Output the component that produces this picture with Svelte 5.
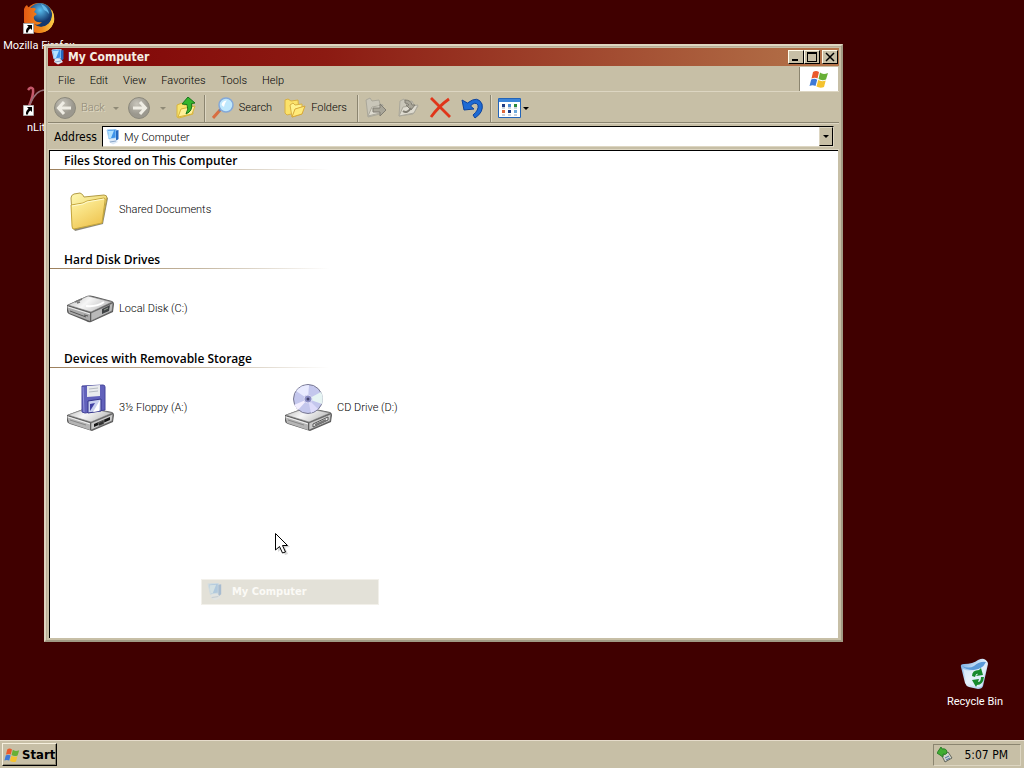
<script lang="ts">
  interface Drive {
    name: string;
    icon: "folder" | "disk" | "floppy" | "cd";
  }

  interface Group {
    title: string;
    items: Drive[];
  }

  const menus = ["File", "Edit", "View", "Favorites", "Tools", "Help"];

  const groups: Group[] = [
    {
      title: "Files Stored on This Computer",
      items: [{ name: "Shared Documents", icon: "folder" }],
    },
    {
      title: "Hard Disk Drives",
      items: [{ name: "Local Disk (C:)", icon: "disk" }],
    },
    {
      title: "Devices with Removable Storage",
      items: [
        { name: "3½ Floppy (A:)", icon: "floppy" },
        { name: "CD Drive (D:)", icon: "cd" },
      ],
    },
  ];

  let address = $state("My Computer");
</script>

{#snippet computer()}
  <svg class="computer" viewBox="0 0 16 16" aria-hidden="true">
    <path d="M2 1 L11 0 L11 9 L4 10Z" fill="#3f94ea" stroke="#a9d2f6" />
    <path d="M3 2 L9 1.500 L6 9 L4 9Z" fill="#b4e2ff" />
    <path d="M11 1.500 L13.500 1 L13.500 10 L11 12Z" fill="#2468c0" />
    <path d="M5 10 L10 9.500 L13 13 L8 15.500 L4 13Z" fill="#dde9f6" />
    <path d="M5 13 L11 12" stroke="#8aa6c8" />
  </svg>
{/snippet}

{#snippet flag()}
  <svg class="flag" viewBox="0 0 20 18" aria-hidden="true">
    <path d="M4 2 Q7 0 10 2 L8.500 8.500 Q6 7 2.500 8.500Z" fill="#ea5a2c" />
    <path d="M11 2.500 Q14 5 19 3 L17 9.500 Q13 11 9.500 9Z" fill="#68b036" />
    <path d="M2.200 9.500 Q5.500 8 8.200 9.700 L6.500 16 Q3.500 14.500 0.500 16Z" fill="#3f79d6" />
    <path d="M9.200 10 Q12.500 12 16.700 10.500 L15 17 Q11 18.500 7.500 16.500Z" fill="#f4c22e" />
  </svg>
{/snippet}

{#snippet shortcut()}
  <svg class="shortcut" viewBox="0 0 11 11" aria-hidden="true">
    <path d="M0.500 0.500h10v10h-10z" fill="#fff" stroke="#aaa" />
    <path d="M4 2h5v5L7.500 5.500C6 6.500 5 7.500 5 9.500H3C2.500 7 4 5 5.500 3.800Z" fill="#000" />
  </svg>
{/snippet}

{#snippet driveIcon(kind: Drive["icon"])}
  <svg class="drive-icon" viewBox="0 0 48 48" aria-hidden="true">
    {#if kind === "folder"}
      <path d="M7 42 L9 45 L37 38 L42 12 L40 11Z" fill="#6f6a58" opacity="0.8" />
      <path d="M5 12 Q5 9 8 8 L14 7 Q17 8 18 11 L38 9 Q41 9 41 12 L36 37 L7 43Z" fill="url(#folder-back)" stroke="#b29b45" />
      <path d="M5 19 L17 17 L21 15 L38 12 Q40 12 39 15 L36 37 L8 43 Q6 43 6 40Z" fill="url(#folder-front)" stroke="#c4a63d" />
      <path d="M6 20 L17 18 L21 16 L38 13" fill="none" stroke="#fffbd2" />
    {:else if kind === "disk"}
      <path d="M1 20 L21 11 Q24 10 27 11 L46 16 Q48 17 48 19 L47 27 L25 37 Q23 38 20 36 L3 29 Q1 28 1 26Z" fill="#5a5a5a" />
      <path d="M2 20 L22 11 L46 17 L25 27Z" fill="url(#metal)" stroke="#858585" stroke-width="0.6" />
      <path d="M1 21 L24 28 L24 36 L3 28Z" fill="#aaa" />
      <path d="M2 22 L24 29" stroke="#eee" />
      <path d="M25 28 L47 18 L46 26 L25 36Z" fill="#b9b9b9" stroke="#666" stroke-width="0.6" />
      <path d="M36 24 L44 20 L43 26 L36 29Z" fill="#3f4244" />
      <path d="M38 25 L42 23" stroke="#939c8e" />
      <path d="M9 17 L16 14 M11 18 L14 17" stroke="#777" stroke-width="1.500" />
      <path d="M20 21 Q31 22 38 17" fill="none" stroke="#fff" stroke-width="2" />
      <path d="M4 26 L20 32 M18 30 L22 31" stroke="#555" />
    {:else}
      <path d="M1 31 L20 24 Q23 23 26 24 L46 28 Q48 29 48 31 L47 38 L26 47 L4 40 Q1 39 1 37Z" fill="#5c5c5c" />
      <path d="M2 31 L22 24 L46 29 L25 38Z" fill="url(#metal)" stroke="#8c8c8c" stroke-width="0.6" />
      <path d="M1 32 L24 39 L24 46 L3 39Z" fill="#b5b5b5" />
      <path d="M2 33 L24 40" stroke="#f2f2f2" />
      <path d="M4 36 L20 41" stroke="#888" />
      <path d="M25 39 L47 30 L46 37 L25 46Z" fill="#c9c9c9" stroke="#666" stroke-width="0.6" />
      {#if kind === "floppy"}
        <path d="M28 40 L44 33 L44 36 L28 43Z" fill="#161616" />
        <path d="M32 39 L38 36 L38 40 L33 42Z" fill="#333" stroke="#999" stroke-width="0.5" />
        <path d="M16 2 L37 1 Q39 1 39 3 L39 26 L19 29 L16 28Z" fill="#6161bb" stroke="#44449a" />
        <path d="M17 3 L18 28" stroke="#9494de" />
        <path d="M21 2 L34 1 L34 12 L21 13Z" fill="#e9ebee" />
        <path d="M23 5 L32 4 M23 8 L32 7" stroke="#b6bbc2" />
        <path d="M22 17 L35 15 L35 27 L22 29Z" fill="#c9d0ef" stroke="#34348a" />
        <path d="M24 20 L29 19 L24 27Z" fill="#4141a4" />
        <path d="M34 16 L27 28 L33 27Z" fill="#fff" />
      {:else}
        <path d="M29 40 L44 33 L44 36 L29 43Z" fill="#f4f4f4" stroke="#555" />
        <path d="M31 41 L42 36" stroke="#777" stroke-width="2" />
        <circle cx="24" cy="15" r="14.500" fill="#c4c7ed" stroke="#777791" />
        <path d="M24 15 L12 7 Q17 1 25 1 Z" fill="#e9ebff" />
        <path d="M24 15 L37 8 Q40 13 38 20Z" fill="#e6f4f3" />
        <path d="M24 15 L14 26 L10 21Z" fill="#f3efff" />
        <path d="M24 15 L27 29 L34 25Z" fill="#dedcfb" />
        <circle cx="24" cy="15" r="4" fill="#8c8ec4" stroke="#dadaf4" />
        <circle cx="24" cy="15" r="1.500" fill="#42426c" />
      {/if}
    {/if}
  </svg>
{/snippet}

<!-- gradients shared by the icons below -->
<svg class="defs" aria-hidden="true">
  <defs>
    <linearGradient id="folder-back" x1="0" y1="0" x2="1" y2="1">
      <stop offset="0" stop-color="#fff8b0" />
      <stop offset="1" stop-color="#e6c552" />
    </linearGradient>
    <linearGradient id="folder-front" x1="0" y1="0" x2="0.6" y2="1">
      <stop offset="0" stop-color="#fff7a8" />
      <stop offset="1" stop-color="#efc552" />
    </linearGradient>
    <linearGradient id="metal" x1="0" y1="0" x2="1" y2="0.4">
      <stop offset="0" stop-color="#bcbcbc" />
      <stop offset="0.5" stop-color="#f6f6f6" />
      <stop offset="1" stop-color="#c2c2c2" />
    </linearGradient>
    <radialGradient id="round-btn" cx="0.4" cy="0.3">
      <stop offset="0" stop-color="#c8c5bb" />
      <stop offset="1" stop-color="#9b988e" />
    </radialGradient>
    <radialGradient id="globe" cx="0.5" cy="0.3">
      <stop offset="0" stop-color="#58bff0" />
      <stop offset="1" stop-color="#14386e" />
    </radialGradient>
    <linearGradient id="fox" x1="0" y1="0" x2="1" y2="0">
      <stop offset="0" stop-color="#e35a14" />
      <stop offset="0.6" stop-color="#f08a1c" />
      <stop offset="1" stop-color="#fbd04a" />
    </linearGradient>
    <linearGradient id="bin" x1="0" y1="0" x2="1" y2="1">
      <stop offset="0" stop-color="#5f9ede" />
      <stop offset="0.5" stop-color="#e4f1fb" />
      <stop offset="1" stop-color="#8db8e4" />
    </linearGradient>
  </defs>
</svg>

<div class="screen">
  <main class="desktop">
    <button class="shortcut-icon firefox">
      <span class="picture">
        <svg class="big" viewBox="0 0 32 32" aria-hidden="true">
          <circle cx="16" cy="16" r="15" fill="url(#fox)" />
          <circle cx="17" cy="13" r="12" fill="url(#globe)" />
          <path d="M18 2 Q25 5 26 12 Q24 9 21 8Z" fill="#65b9e8" />
          <path d="M1 7 Q2 4 4 3 Q5 6 8 6 Q11 5 13 7 L11 10 Q15 12 13 13 Q10 14 11 17 Q13 21 19 20 Q16 24 11 22 Q18 28 26 22 Q30 17 29 8 Q32 14 31 20 Q27 31 16 31 Q5 31 1 20Z" fill="url(#fox)" />
        </svg>
        {@render shortcut()}
      </span>
      Mozilla Firefox
    </button>

    <button class="shortcut-icon nlite">
      <span class="picture">
        <svg class="big" viewBox="0 0 32 32" aria-hidden="true">
          <path d="M5 6 Q8 2 10 5 Q11 10 6 22" fill="none" stroke="#c4586a" stroke-width="2.500" />
          <path d="M7 20 Q13 6 22 6" fill="none" stroke="#957077" stroke-width="1.500" />
        </svg>
        {@render shortcut()}
      </span>
      nLite
    </button>

    <button class="shortcut-icon recycle">
      <span class="picture">
        <svg class="big" viewBox="0 0 32 32" aria-hidden="true">
          <path d="M2 9 Q1 6 5 6 Q14 6 19 2 Q23 0 25 1 Q29 3 29 6 L24 28 Q23 31 19 31 L10 29 Q7 28 6 25Z" fill="url(#bin)" />
          <path d="M3 8 Q10 11 15 8 Q21 3 27 4 Q23 12 14 12 Q7 12 3 8Z" fill="#5a9ad8" />
          <path d="M4 11 Q10 14 16 12 Q24 10 28 6 L23 28 Q20 30 17 29 L8 26Z" fill="#e5f2fb" opacity="0.75" />
          <path d="M13 18 Q13 12 20 12 L22 10 L24 17 L17 18 L19 16 Q17 15 16 19Z" fill="#178a2d" />
          <path d="M25 19 Q24 27 18 27 L17 29 L13 22 L20 21 L19 24 Q22 24 22 19Z" fill="#178a2d" />
        </svg>
      </span>
      Recycle Bin
    </button>

    <section class="window" aria-label="My Computer">
      <header class="titlebar">
        {@render computer()}
        <h1>My Computer</h1>
        <div class="captions">
          <button aria-label="Minimize">
            <svg viewBox="0 0 12 10"><path d="M2 7h6v2H2z" /></svg>
          </button>
          <button aria-label="Maximize">
            <svg viewBox="0 0 12 10"><path d="M1 0h10v10H1zM2 2v7h8V2z" fill-rule="evenodd" /></svg>
          </button>
          <button class="close" aria-label="Close">
            <svg viewBox="0 0 12 10"><path d="M2 1 L10 9 M10 1 L2 9" stroke="#000" stroke-width="1.500" /></svg>
          </button>
        </div>
      </header>

      <nav class="menubar">
        {#each menus as menu (menu)}
          <button>{menu}</button>
        {/each}
        <span class="throbber">{@render flag()}</span>
      </nav>

      <div class="toolbar">
        <button class="tool off back" disabled>
          <svg class="icon" viewBox="0 0 22 22">
            <circle cx="11" cy="11" r="10.500" fill="url(#round-btn)" stroke="#8c897c" />
            <path d="M10 5 L4.500 11 L10 17 M5 11 H17" fill="none" stroke="#efede4" stroke-width="3" />
          </svg>
          Back
        </button>
        <button class="drop off" disabled aria-label="Back history"></button>
        <button class="tool off" disabled aria-label="Forward">
          <svg class="icon" viewBox="0 0 22 22">
            <circle cx="11" cy="11" r="10.500" fill="url(#round-btn)" stroke="#8c897c" />
            <path d="M12 5 L17.500 11 L12 17 M17 11 H5" fill="none" stroke="#efede4" stroke-width="3" />
          </svg>
        </button>
        <button class="drop off" disabled aria-label="Forward history"></button>
        <button class="tool last" aria-label="Up">
          <svg class="icon" viewBox="0 0 22 22">
            <path d="M2 8 L7 6 L9 8 L17 7 L18 17 L4 21 L2 20Z" fill="#f8e46e" stroke="#d8b43c" />
            <path d="M3 20 L6 12 L20 9 L17 17Z" fill="#fff09a" stroke="#d8b43c" />
            <path d="M7 7 L13 0 L20 6 L16.500 6.500 Q18 14 11 17 Q14 12 12 7.500Z" fill="#34b62c" stroke="#17741a" />
          </svg>
        </button>
        <span class="sep"></span>
        <button class="tool search">
          <svg class="icon" viewBox="0 0 22 22">
            <path d="M1 21 L9 12" stroke="#d86e42" stroke-width="3" />
            <path d="M7 14 L10 11" stroke="#6b83a8" stroke-width="2" />
            <circle cx="14" cy="8" r="7" fill="#bfe8fd" stroke="#84a8d8" stroke-width="1.500" />
            <path d="M9.500 8 Q10 3.500 15 3.500 Q13 5 12 10Z" fill="#fff" />
          </svg>
          Search
        </button>
        <button class="tool">
          <svg class="icon" viewBox="0 0 22 22">
            <path d="M1 3 L4 2 L7 4 L14 3 L15 15 L3 18 L1 16Z" fill="#fbe26a" stroke="#d8b043" />
            <path d="M6 8 L9 6 L11 8 L18 7 L18 17 L8 20Z" fill="#fff28e" stroke="#d8b043" />
            <path d="M8 20 L11 12 L21 9 L18 17Z" fill="#ffeb79" stroke="#d8a83a" />
          </svg>
          Folders
        </button>
        <span class="sep"></span>
        <button class="tool off" disabled aria-label="Move To">
          <svg class="icon" viewBox="0 0 22 22">
            <path d="M1 3 L5 1 L7 4 L14 3 L15 7 L18 8 L15 17 L3 20Z" fill="#c9c6b9" stroke="#aaa79a" />
            <path d="M3 19 L7 10 L18 8 L15 16Z" fill="#dedbd0" stroke="#aaa79a" />
            <path d="M8 11 H15 V7 L21 13 L15 19 V15 H8Z" fill="#a9a699" stroke="#807d72" />
          </svg>
        </button>
        <button class="tool off" disabled aria-label="Copy To">
          <svg class="icon" viewBox="0 0 22 22">
            <path d="M3 4 L7 2 L9 5 L15 4 L17 8 L21 9 L16 17 L2 19Z" fill="#c9c6b9" stroke="#aaa79a" />
            <path d="M2 19 L6 10 L21 8 L17 16Z" fill="#dedbd0" stroke="#aaa79a" />
            <path d="M8 3 Q14 3 15 8 H18 L14 13 L9 8 H12 Q11 6 8 6Z" fill="#a9a699" stroke="#807d72" />
            <path d="M6 14 Q10 17 14 11" fill="none" stroke="#807d72" stroke-width="2" />
          </svg>
        </button>
        <button class="tool" aria-label="Delete">
          <svg class="icon" viewBox="0 0 22 22">
            <path d="M2 1 Q9 8 21 20 M20 2 Q10 9 2 20" fill="none" stroke="#e0351a" stroke-width="2.800" />
          </svg>
        </button>
        <button class="tool last" aria-label="Undo">
          <svg class="icon" viewBox="0 0 22 22">
            <path d="M1 3 L3 13 L13 12 L9.500 9 Q14 4 17 8 Q18 13 12 18 L14 21 Q23 15 21 7 Q17 -2 6.500 6Z" fill="#1d6ad4" stroke="#0e439c" />
          </svg>
        </button>
        <span class="sep"></span>
        <button class="tool views" aria-label="Views">
          <svg class="views-icon" viewBox="0 0 23 20">
            <path d="M0.500 0.500h22v19h-22z" fill="#fff" stroke="#2264b8" />
            <path d="M1 1h21v3H1z" fill="#3c84d8" />
            <path d="M4 6h3v3H4zM10 12h3v3h-3z" fill="#1c3a84" />
            <path d="M10 6h3v3h-3z" fill="#4987d0" />
            <path d="M16 6h3v3h-3z" fill="#2b8a3c" />
            <path d="M4 12h3v3H4z" fill="#e0683a" />
            <path d="M16 12h3v3h-3z" fill="#6ca8dc" />
            <path d="M4 17h3M10 17h3M16 17h3M4 10h3M10 10h3M16 10h3" stroke="#9ab" />
          </svg>
        </button>
        <button class="drop" aria-label="Choose view"></button>
      </div>

      <div class="addressbar">
        <label for="address">Address</label>
        <div class="combo">
          {@render computer()}
          <input id="address" type="text" bind:value={address} />
          <button class="open" aria-label="Show addresses"></button>
        </div>
      </div>

      <div class="view">
        {#each groups as group (group.title)}
          <section class="group">
            <h2>{group.title}</h2>
            <div class="items">
              {#each group.items as item (item.name)}
                <button class="item">
                  {@render driveIcon(item.icon)}
                  {item.name}
                </button>
              {/each}
            </div>
          </section>
        {/each}
      </div>
    </section>

    <!-- minimize animation, almost faded out -->
    <div class="ghost" aria-hidden="true">
      {@render computer()}
      <span>My Computer</span>
    </div>

    <svg class="cursor" viewBox="0 0 16 24" aria-hidden="true">
      <path d="M3 3 L3 19 L7 15.500 L10 22 L13 21 L10 14.500 L15 14Z" fill="#999" opacity="0.4" />
      <path d="M0.500 0.500 L0.500 17 L4.500 13.500 L7.500 20 L10.500 19 L7.500 12.500 L12.500 12.500Z" fill="#fff" stroke="#000" />
    </svg>
  </main>

  <footer class="taskbar">
    <button class="start">{@render flag()} Start</button>
    <div class="tray">
      <svg class="tray-icon" viewBox="0 0 16 16" aria-hidden="true">
        <path d="M5 9 L11 5 L15 11 L8 15Z" fill="#d2d4cc" stroke="#62665c" />
        <path d="M8 11 L12 9 M9 13 L13 11" stroke="#4b6ea0" />
        <path d="M0 6 L4 0 L5 2 Q10 1 10 6 Q9 8 6 7 L6 10Z" fill="#41ad32" stroke="#2b7f28" />
      </svg>
      <time>5:07 PM</time>
    </div>
  </footer>
</div>

<style>
  :global(body) {
    --face: #c7bfa6;
    --light: #ddd6c2;
    --shade: #8b8570;
    --ui: Roboto, "Liberation Sans", sans-serif;
    --wide: "DejaVu Sans Condensed", "DejaVu Sans", sans-serif;
    background: #400000;
    color: #000;
    font: 300 11px/16px var(--ui);
  }

  button,
  input {
    margin: 0;
    padding: 0;
    border: 0;
    background: none;
    color: inherit;
    font: inherit;
  }

  svg {
    display: block;
    flex: none;
  }

  .defs {
    position: absolute;
    width: 0;
    height: 0;
  }

  .screen {
    display: flex;
    flex-direction: column;
    height: 100vh;
    overflow: hidden;
  }

  .desktop {
    position: relative;
    flex: 1;
  }

  .shortcut-icon {
    position: absolute;
    display: flex;
    flex-direction: column;
    align-items: center;
    gap: 4px;
    width: 78px;
    color: #fff;
    font-weight: 400;
    white-space: nowrap;
  }

  .firefox {
    left: 0;
    top: 2px;
  }

  .nlite {
    left: 0;
    top: 84px;
  }

  .recycle {
    right: 10px;
    bottom: 30px;
  }

  .picture {
    position: relative;
  }

  .big {
    width: 32px;
    height: 32px;
  }

  .shortcut {
    position: absolute;
    left: 0;
    bottom: 0;
    width: 11px;
    height: 11px;
  }

  .computer {
    width: 16px;
    height: 16px;
  }

  /* window */
  .window {
    position: absolute;
    inset: 44px 181px 98px 44px;
    display: flex;
    flex-direction: column;
    box-sizing: border-box;
    padding: 2px;
    border: 2px solid;
    border-color: #ded5c0 #a19a84 #a19a84 #ded5c0;
    background: var(--face);
    box-shadow: inset 1px 1px #b6ad96;
  }

  .titlebar {
    display: flex;
    align-items: center;
    gap: 2px;
    height: 18px;
    padding: 0 1px 0 2px;
    background: linear-gradient(90deg, #800406, #8c1a12 35%, #b4744a);
    color: #f6eee2;
  }

  h1 {
    flex: 1;
    margin: 0;
    padding-top: 1px;
    font: bold 12px/17px var(--wide);
  }

  .captions {
    display: flex;
  }

  .captions button {
    display: grid;
    place-items: center;
    box-sizing: border-box;
    width: 16px;
    height: 14px;
    border: 1px solid;
    border-color: #fffbea #000 #000 #fffbea;
    background: var(--face);
  }

  .captions .close {
    margin-left: 2px;
  }

  .captions svg {
    width: 12px;
    height: 10px;
  }

  .menubar {
    display: flex;
    align-items: stretch;
    height: 24px;
    margin-top: 1px;
    padding: 0 1px 0 2px;
    border-bottom: 1px solid var(--light);
  }

  .menubar button {
    padding: 3px 8px 0 7px;
  }

  .menubar button:first-child {
    padding-left: 8px;
  }

  .throbber {
    display: grid;
    place-items: center;
    width: 38px;
    margin-left: auto;
    border-left: 1px solid var(--shade);
    background: #fff;
  }

  .flag {
    width: 20px;
    height: 18px;
  }

  .toolbar {
    display: flex;
    align-items: center;
    height: 28px;
    padding: 2px 0 0 6px;
    border-bottom: 1px solid var(--shade);
  }

  .tool {
    display: flex;
    align-items: center;
    gap: 5px;
    margin-right: 10px;
  }

  .off {
    color: #8f8a76;
    text-shadow: 1px 1px #e2dcc8;
  }

  .back {
    margin-right: 8px;
  }

  .last {
    margin-right: 7px;
  }

  .icon {
    width: 22px;
    height: 22px;
  }

  .drop {
    width: 7px;
    height: 22px;
    margin-right: 8px;
  }

  .drop::before,
  .open::before {
    display: block;
    width: 0;
    margin: 0 auto;
    border: 3px solid transparent;
    border-top-color: #000;
    border-bottom: 0;
    content: "";
  }

  .drop.off::before {
    border-top-color: #8f8a76;
  }

  .sep {
    width: 1px;
    height: 27px;
    margin-right: 6px;
    border-left: 1px solid var(--shade);
    background: var(--light);
  }

  .search {
    margin-right: 12px;
  }

  .views {
    margin-right: 2px;
  }

  .views-icon {
    width: 23px;
    height: 20px;
  }

  .addressbar {
    display: flex;
    align-items: center;
    gap: 5px;
    height: 25px;
    padding: 0 5px 0 6px;
    border-top: 1px solid var(--light);
    border-bottom: 1px solid var(--light);
  }

  label {
    font: 12px/16px var(--wide);
  }

  .combo {
    display: flex;
    flex: 1;
    align-items: center;
    gap: 3px;
    box-sizing: border-box;
    height: 21px;
    padding-left: 2px;
    border: 1px solid;
    border-color: #000 var(--light) var(--light) #000;
    background: #fff;
  }

  input {
    flex: 1;
    min-width: 0;
    padding-top: 2px;
    outline: 0;
  }

  .open {
    box-sizing: border-box;
    width: 14px;
    height: 19px;
    border: 1px solid;
    border-color: var(--light) #000 #000 var(--light);
    background: var(--face);
  }

  .view {
    flex: 1;
    min-height: 0;
    margin: 0 1px 0 1px;
    overflow: hidden;
    border-top: 1px solid #000;
    border-left: 1px solid #000;
    background: #fff;
  }

  h2 {
    margin: 0;
    padding: 2px 0 0 14px;
    border-bottom: 1px solid;
    border-image: linear-gradient(90deg, #9c7f5c, #c4b6a0 150px, transparent 280px) 1;
    font: 600 12px/16px "Open Sans", sans-serif;
  }

  .items {
    display: flex;
    flex-wrap: wrap;
    padding: 16px 0 16px 16px;
  }

  .item {
    display: flex;
    align-items: center;
    gap: 5px;
    width: 218px;
  }

  .drive-icon {
    width: 48px;
    height: 48px;
  }

  .ghost {
    position: absolute;
    left: 201px;
    top: 579px;
    display: flex;
    align-items: center;
    gap: 8px;
    box-sizing: border-box;
    width: 178px;
    height: 26px;
    padding: 0 4px;
    border: 1px solid #f2f0ea;
    background: #e3e1d8;
    color: #fbfaf6;
    font: bold 11px/16px var(--wide);
  }

  .ghost .computer {
    width: 18px;
    height: 18px;
    opacity: 0.3;
  }

  .cursor {
    position: absolute;
    left: 275px;
    top: 533px;
    width: 16px;
    height: 24px;
  }

  /* taskbar */
  .taskbar {
    display: flex;
    align-items: center;
    justify-content: space-between;
    box-sizing: border-box;
    height: 28px;
    padding: 0 3px 0 2px;
    border-top: 1px solid #e6dccb;
    background: var(--face);
  }

  .start {
    display: flex;
    align-items: center;
    gap: 2px;
    box-sizing: border-box;
    height: 23px;
    padding: 0 1px;
    border: 1px solid;
    border-color: #f6f0de #000 #000 #f6f0de;
    box-shadow: inset -1px -1px var(--shade);
    font: bold 13px/16px var(--wide);
  }

  .start .flag {
    width: 16px;
    height: 16px;
  }

  .tray {
    display: flex;
    align-items: center;
    gap: 12px;
    box-sizing: border-box;
    height: 22px;
    padding: 0 12px 0 3px;
    border: 1px solid;
    border-color: var(--shade) var(--light) var(--light) var(--shade);
    font: 12px/16px var(--wide);
  }

  .tray-icon {
    width: 16px;
    height: 16px;
  }
</style>
